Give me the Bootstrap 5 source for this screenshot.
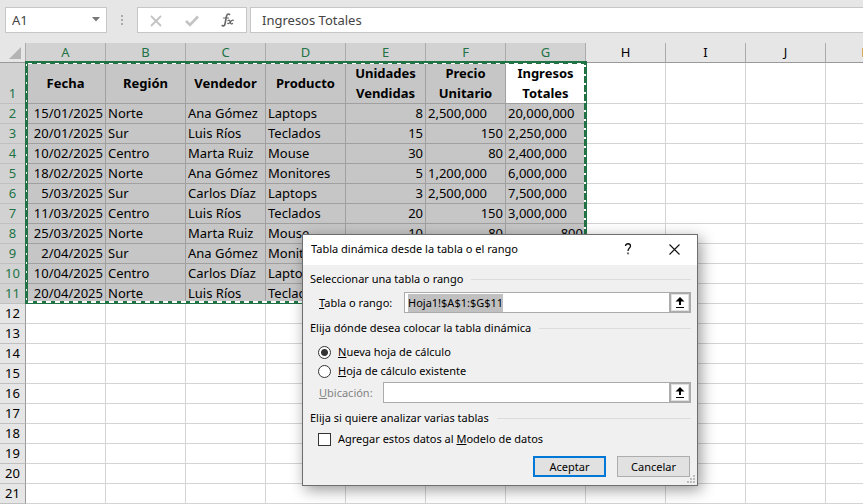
<!DOCTYPE html>
<html lang="es">
<head>
<meta charset="utf-8">
<meta name="viewport" content="width=device-width, initial-scale=1">
<title>Tabla dinámica</title>
<link href="https://cdn.jsdelivr.net/npm/bootstrap@5.3.0/dist/css/bootstrap.min.css" rel="stylesheet">
<style>
body{font-family:"Noto Sans","Open Sans",sans-serif;font-size:13px;line-height:20px;color:#000;background:#fff}
.fbar{background:#e6e6e6;padding:7px 0 10px 5px;color:#444}
.fbox{background:#fff;border:1px solid #c6c6c6;height:26px}
.namebox{width:102px}
.namebox input,.fentry{outline:0;color:#444;min-width:0}
.namebox input{border:0;background:none;padding:0 6px}
.fentry{border-right:0;padding:0 0 0 11px}
.grip{width:30px}
.tools{width:110px;margin-right:3px}
.plain{background:none;border:0;padding:0;line-height:1}
.sheet{table-layout:fixed;border-collapse:separate;border-spacing:0;width:906px}
.sheet .rh{width:26px}
.sheet .cc{width:80px}
.sheet td,.sheet th{border:0 solid #d4d4d4;border-width:0 1px 1px 0;padding:0 2px;height:20px;line-height:19px;white-space:nowrap}
.sheet th{background:#e6e6e6;font-weight:400;text-align:center}
.sheet thead th{border-color:#ababab;border-bottom-color:#999}
.sheet tbody th{border-color:#c0c0c0;border-right-color:#999;padding:0;vertical-align:bottom}
.sheet th.on{background:#d2d2d2;color:#217346}
.sheet td.sel{background:#c6c6c6;border-color:#a0a0a0}
.sheet .titles td{height:40px;font-weight:700;text-align:center;vertical-align:middle;line-height:20px}
.sheet td.live{background:#fff}
.ants{left:25px;top:18px;width:562px;height:243px;pointer-events:none}
.dlg{left:302px;top:234px;width:396px;background:#f0f0f0;border:1px solid #6e6e6e;box-shadow:3px 4px 14px rgba(0,0,0,.4);font-size:11px;line-height:18px}
.dlg-head{background:#fff;height:30px;padding:0 17px 2px 8px}
.help{margin-right:37px}
.dlg-body{padding:5px 6px 8px 7px}
.dlg fieldset{margin-bottom:6px}
.dlg legend{font-size:11px;line-height:18px;margin:0}
.rule{height:1px;background:#dcdcdc}
.field{height:21px;border:1px solid #ababab;background:#fff}
.field input{border:0;outline:0;background:none;padding:0 3px;min-width:0}
.field input::selection{background:#c0c0c0;color:#000}
#rango{background:linear-gradient(#000,#000) 97px center/1px 13px no-repeat}
.pick{width:22px;border:2px solid #ababab;background:#fff;padding:0;margin:-1px;box-shadow:inset 0 0 0 1px #e1e1e1}
.pad-in{padding-left:9px}
.place{padding-top:2px}
.lbl-a{width:85px}
.lbl-b{width:64px}
.mute{color:#838383}
.opt-row{padding-left:8px;gap:7px}
.opts{gap:1px;padding-top:6px}
.model{padding-top:3px}
.opt{appearance:none;width:13px;height:13px;margin:0;border:1px solid #333;background:#fff}
.opt[type=radio]{border-radius:50%}
.opt[type=radio]:checked{background:radial-gradient(circle,#333 0 3px,#fff 4px)}
.acts{gap:11px;margin-top:8px;padding-right:1px}
.act{width:73px;height:21px;border:1px solid #adadad;background:#e1e1e1;padding:0;line-height:17px}
.act.main{border:2px solid #0078d7}
.sizer{right:2px;bottom:2px}
</style>
<script src="https://cdn.jsdelivr.net/npm/bootstrap@5.3.0/dist/js/bootstrap.bundle.min.js"></script>
</head>
<body class="vh-100 overflow-hidden position-relative">
<header class="fbar d-flex align-items-center">
  <div class="fbox namebox d-flex align-items-center flex-shrink-0">
    <input class="flex-grow-1 w-100" value="A1" aria-label="Cuadro de nombres">
    <button class="plain pe-1 d-flex" aria-label="Abrir nombres"><svg width="12" height="7"><path d="M2 0h8l-4 4.500z" fill="#777"/></svg></button>
  </div>
  <div class="grip d-flex justify-content-center flex-shrink-0"><svg width="2" height="11" fill="#ababab"><path d="M0 0h2v2H0zM0 4h2v2H0zM0 8h2v2H0z"/></svg></div>
  <div class="fbox tools d-flex align-items-center justify-content-around flex-shrink-0">
    <button class="plain" aria-label="Cancelar entrada"><svg width="14" height="12" fill="none" stroke="#c3c3c3" stroke-width="1.800"><path d="M2 1l10 10M12 1L2 11"/></svg></button>
    <button class="plain" aria-label="Introducir"><svg width="14" height="12" fill="none" stroke="#c3c3c3" stroke-width="2.600"><path d="M1 6l4 4 8-8.500"/></svg></button>
    <button class="plain" aria-label="Insertar función"><svg width="14" height="14" fill="none" stroke="#666" stroke-linecap="round"><path d="M8.500 1.500C6.500 0 5.700 2 5.300 4L4 11c-.4 2-1.500 2.300-2.800 1.500" stroke-width="1.600"/><path d="M2.500 5H7.500" stroke-width="1.200"/><path d="M7 7.500c1.500-.8 2 .2 2.300 1.700s.9 2.200 2.200 1.300M12.300 7.300c-1.300-.6-2.200.8-3 1.800s-1.300 1.700-2.500 1.400" stroke-width="1.300"/></svg></button>
  </div>
  <input class="fbox fentry flex-grow-1" value="Ingresos Totales" aria-label="Barra de fórmulas">
</header>
<main class="position-relative">
  <table class="sheet">
    <colgroup><col class="rh"><col class="cc" span="11"></colgroup>
    <thead><tr id="letters"><th class="p-0" aria-label="Seleccionar todo"><svg class="d-block ms-auto me-1" width="12" height="12"><path d="M12 0v12H0z" fill="#b4b4b4"/></svg></th></tr></thead>
    <tbody id="cells"></tbody>
  </table>
  <svg class="ants position-absolute" fill="none">
    <rect x="1.500" y="1.500" width="559" height="240" stroke="#217346" stroke-width="3"/>
    <g stroke="#fff">
      <path d="M3 2.500H559" stroke-width="1" stroke-dasharray="4 5"/>
      <path d="M1.500 3V240" stroke-width="1" stroke-dasharray="2 7"/>
      <path d="M560 4V240" stroke-width="2" stroke-dasharray="2 7"/>
      <path d="M3 241H559" stroke-width="2" stroke-dasharray="5 4"/>
    </g>
  </svg>
</main>
<section class="dlg position-absolute" role="dialog" aria-labelledby="dlgTitle">
  <div class="dlg-head d-flex align-items-center">
    <span id="dlgTitle" class="me-auto">Tabla dinámica desde la tabla o el rango</span>
    <button class="plain help d-flex" aria-label="Ayuda"><svg width="8" height="12" fill="none" stroke="#111" stroke-width="1.300"><path d="M1.500 3c0-3 5-3 5 0 0 2-2.500 2-2.500 5M4 9.500v1.800"/></svg></button>
    <button class="plain d-flex" aria-label="Cerrar"><svg width="11" height="11" stroke="#111" stroke-width="1.100"><path d="M.5.5l10 10M10.500.5l-10 10"/></svg></button>
  </div>
  <form class="dlg-body">
    <fieldset>
      <legend class="d-flex align-items-center gap-2">Seleccionar una tabla o rango<span class="rule flex-grow-1"></span></legend>
      <div class="d-flex align-items-center pad-in pt-1">
        <label class="lbl-a" for="rango"><u>T</u>abla o rango:</label>
        <div class="field d-flex flex-grow-1"><input id="rango" class="flex-grow-1" value="Hoja1!$A$1:$G$11"><button type="button" class="pick d-flex align-items-center justify-content-center" aria-label="Elegir rango"><svg width="10" height="11"><path d="M5 0l4.500 4.500H6V8H4V4.500H.5zM1 10h8v1H1z"/></svg></button></div>
      </div>
    </fieldset>
    <fieldset>
      <legend class="d-flex align-items-center gap-2">Elija dónde desea colocar la tabla dinámica<span class="rule flex-grow-1"></span></legend>
      <div class="opts d-flex flex-column">
        <div class="opt-row d-flex align-items-center"><input class="opt" type="radio" name="destino" id="nueva" checked><label for="nueva"><u>N</u>ueva hoja de cálculo</label></div>
        <div class="opt-row d-flex align-items-center"><input class="opt" type="radio" name="destino" id="existente"><label for="existente"><u>H</u>oja de cálculo existente</label></div>
      </div>
      <div class="place d-flex align-items-center pad-in">
        <label class="lbl-b mute" for="ubicacion"><u>U</u>bicación:</label>
        <div class="field d-flex flex-grow-1"><input id="ubicacion" class="flex-grow-1"><button type="button" class="pick d-flex align-items-center justify-content-center" aria-label="Elegir ubicación"><svg width="10" height="11"><path d="M5 0l4.500 4.500H6V8H4V4.500H.5zM1 10h8v1H1z"/></svg></button></div>
      </div>
    </fieldset>
    <fieldset class="mb-0">
      <legend class="d-flex align-items-center gap-2">Elija si quiere analizar varias tablas<span class="rule flex-grow-1"></span></legend>
      <div class="opt-row model d-flex align-items-center"><input class="opt" type="checkbox" id="modelo"><label for="modelo">Agregar estos datos al <u>M</u>odelo de datos</label></div>
    </fieldset>
    <div class="acts d-flex justify-content-end">
      <button type="button" class="act main">Aceptar</button>
      <button type="button" class="act">Cancelar</button>
    </div>
  </form>
  <svg class="sizer position-absolute" width="8" height="8" fill="#bdbdbd"><path d="M6 0h2v2H6zM3 3h2v2H3zM6 3h2v2H6zM0 6h2v2H0zM3 6h2v2H3zM6 6h2v2H6z"/></svg>
</section>
<script>
const rows = [
  ['Fecha','Región','Vendedor','Producto','Unidades<br>Vendidas','Precio<br>Unitario','Ingresos<br>Totales'],
  ['15/01/2025','Norte','Ana Gómez','Laptops','8','2,500,000','20,000,000'],
  ['20/01/2025','Sur','Luis Ríos','Teclados','15','150','2,250,000'],
  ['10/02/2025','Centro','Marta Ruiz','Mouse','30','80','2,400,000'],
  ['18/02/2025','Norte','Ana Gómez','Monitores','5','1,200,000','6,000,000'],
  ['5/03/2025','Sur','Carlos Díaz','Laptops','3','2,500,000','7,500,000'],
  ['11/03/2025','Centro','Luis Ríos','Teclados','20','150','3,000,000'],
  ['25/03/2025','Norte','Marta Ruiz','Mouse','10','80','800'],
  ['2/04/2025','Sur','Ana Gómez','Monitores'],
  ['10/04/2025','Centro','Carlos Díaz','Laptops'],
  ['20/04/2025','Norte','Luis Ríos','Teclados']
];
const letters = 'ABCDEFGHIJK';
document.getElementById('letters').insertAdjacentHTML('beforeend',
  [...letters].map((l, i) => `<th class="${i < 7 ? 'on' : ''}">${l}</th>`).join(''));
let html = '';
for (let r = 0; r < 21; r++) {
  const data = rows[r];
  html += `<tr class="${r ? '' : 'titles'}"><th class="${data ? 'on' : ''}">${r + 1}</th>`;
  for (let c = 0; c < letters.length; c++) {
    const v = (data && data[c]) || '';
    const cls = data && c < 7 ? 'sel' + (r === 0 && c === 6 ? ' live' : '') + (/^[\d\/]+$/.test(v) ? ' text-end' : '') : '';
    html += `<td class="${cls}">${v}</td>`;
  }
  html += '</tr>';
}
document.getElementById('cells').innerHTML = html;
document.getElementById('rango').select();
</script>
</body>
</html>
